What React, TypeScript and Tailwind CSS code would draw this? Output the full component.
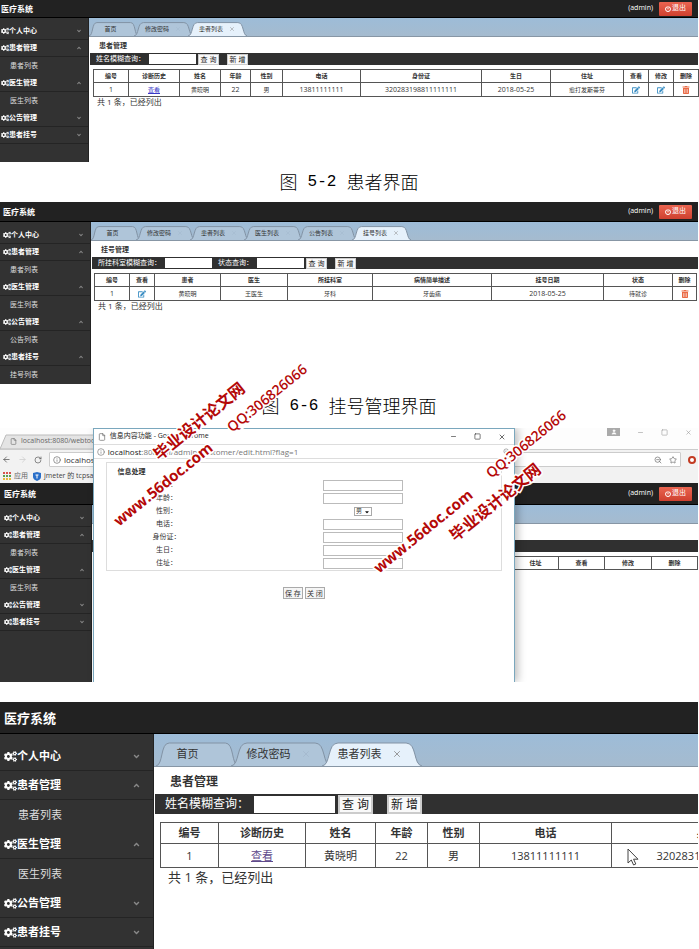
import type { ReactNode } from "react";
import { FaAngleDown, FaAngleUp, FaCaretDown, FaCogs, FaEdit, FaPowerOff, FaTrashAlt } from "react-icons/fa";
import { ArrowLeft, ArrowRight, File, Info, Minus, RotateCw, Square, Star, User, X, ZoomOut } from "lucide-react";

interface MenuGroup {
  label: string;
  items: string[];
}

interface Column {
  label: string;
  width: string;
}

const patientMenu: MenuGroup[] = [
  { label: "个人中心", items: [] },
  { label: "患者管理", items: ["患者列表"] },
  { label: "医生管理", items: ["医生列表"] },
  { label: "公告管理", items: [] },
  { label: "患者挂号", items: [] },
];

const registerMenu: MenuGroup[] = [
  { label: "个人中心", items: [] },
  { label: "患者管理", items: ["患者列表"] },
  { label: "医生管理", items: ["医生列表"] },
  { label: "公告管理", items: ["公告列表"] },
  { label: "患者挂号", items: ["挂号列表"] },
];

const patientColumns: Column[] = [
  { label: "编号", width: "w-[35px]" },
  { label: "诊断历史", width: "w-[51px]" },
  { label: "姓名", width: "w-[41px]" },
  { label: "年龄", width: "w-[30px]" },
  { label: "性别", width: "w-[32px]" },
  { label: "电话", width: "w-[78px]" },
  { label: "身份证", width: "w-[121px]" },
  { label: "生日", width: "w-[69px]" },
  { label: "住址", width: "w-[73px]" },
  { label: "查看", width: "w-[25px]" },
  { label: "修改", width: "w-[25px]" },
  { label: "删除", width: "w-[25px]" },
];

const registerColumns: Column[] = [
  { label: "编号", width: "w-[35px]" },
  { label: "查看", width: "w-[25px]" },
  { label: "患者", width: "w-[66px]" },
  { label: "医生", width: "w-[67px]" },
  { label: "所挂科室", width: "w-[85px]" },
  { label: "病情简单描述", width: "w-[119px]" },
  { label: "挂号日期", width: "w-[112px]" },
  { label: "状态", width: "w-[69px]" },
  { label: "删除", width: "w-[24px]" },
];

const editColumns: Column[] = [
  { label: "住址", width: "w-[46px]" },
  { label: "查看", width: "w-[46px]" },
  { label: "修改", width: "w-[47px]" },
  { label: "删除", width: "w-[46px]" },
];

const zoomedColumns: Column[] = [
  { label: "编号", width: "w-[58px]" },
  { label: "诊断历史", width: "w-[87px]" },
  { label: "姓名", width: "w-[70px]" },
  { label: "年龄", width: "w-[52px]" },
  { label: "性别", width: "w-[52px]" },
  { label: "电话", width: "w-[132px]" },
  { label: "身份证", width: "w-[203px]" },
];

const historyLink = (
  <a href="#history" className="text-[#3a3ac8] underline">
    查看
  </a>
);

const visitedLink = (
  <a href="#history" className="text-[#5f4a8b] underline">
    查看
  </a>
);

const editButton = (
  <button aria-label="编辑" className="mx-auto block text-[#3d8fc4]">
    <FaEdit size={8} />
  </button>
);

const deleteButton = (
  <button aria-label="删除" className="mx-auto block text-[#ea6a45]">
    <FaTrashAlt size={8} />
  </button>
);

export default function App() {
  return (
    <main className="relative min-h-screen overflow-hidden bg-white pr-px font-['Open_Sans','Noto_Sans_CJK_SC',sans-serif] text-[#333]">
      <section className="flex flex-col">
        <TopBar height="h-[18px]" pad="pl-px" />
        <div className="flex">
          <Sidebar groups={patientMenu} width="w-[89px]" pad="pl-px" bottom="pb-[18px]" />
          <div className="min-w-0 flex-1">
            <TabBar tabs={["首页", "修改密码", "患者列表"]} />
            <PageTitle text="患者管理" />
            <SearchBar fields={["姓名模糊查询："]} />
            <div className="pl-1 pr-px pt-1">
              <DataTable
                columns={patientColumns}
                row={["1", historyLink, "黄晓明", "22", "男", "13811111111", "320283198811111111", "2018-05-25", "愈打发斯蒂芬", editButton, editButton, deleteButton]}
              />
              <p className="pl-1 text-[8px] leading-[10px]">共 1 条，已经列出</p>
            </div>
          </div>
        </div>
      </section>

      <Caption number="5-2" text="患者界面" height="h-10" />

      <section className="flex flex-col">
        <TopBar height="h-5" pad="pl-[3px]" />
        <div className="flex">
          <Sidebar groups={registerMenu} width="w-[91px]" pad="pl-[3px]" bottom="pb-0" />
          <div className="min-w-0 flex-1">
            <TabBar tabs={["首页", "修改密码", "患者列表", "医生列表", "公告列表", "挂号列表"]} />
            <PageTitle text="挂号管理" />
            <SearchBar fields={["所挂科室模糊查询：", "状态查询："]} />
            <div className="pl-[3px] pr-0.5 pt-1">
              <DataTable
                columns={registerColumns}
                row={["1", editButton, "黄晓明", "王医生", "牙科", "牙齿痛", "2018-05-25", "待就诊", deleteButton]}
              />
              <p className="pl-1 text-[8px] leading-[10px]">共 1 条，已经列出</p>
            </div>
          </div>
        </div>
      </section>

      <Caption number="6-6" text="挂号管理界面" height="h-11" />

      <section className="relative mb-5 flex flex-col overflow-hidden">
        <BrowserChrome />
        <TopBar height="h-[22px]" pad="pl-1" />
        <div className="flex">
          <Sidebar groups={patientMenu} width="w-[92px]" pad="pl-1" bottom="pb-[51px]" />
          <div className="min-w-0 flex-1">
            <TabBar tabs={[]} />
            <div className="h-4" />
            <div className="h-3 bg-[#303030]" />
            <div className="flex justify-end pr-px pt-1">
              <div className="w-[185px]">
                <DataTable columns={editColumns} />
              </div>
            </div>
          </div>
        </div>
        <EditWindow />
      </section>

      <section className="flex flex-col overflow-hidden">
        <header className="flex h-8 items-center border-b border-black bg-[#222] pl-1">
          <h1 className="text-[13px] font-bold leading-4 text-white">医疗系统</h1>
        </header>
        <div className="flex">
          <Sidebar groups={patientMenu} width="w-[154px]" pad="pl-1" bottom="pb-[3px]" large />
          <div className="min-w-0 flex-1 overflow-hidden">
            <TabBar tabs={["首页", "修改密码", "患者列表"]} large />
            <PageTitle text="患者管理" large />
            <SearchBar fields={["姓名模糊查询："]} large />
            <div className="relative pl-1.5 pt-2">
              <div className="w-[655px]">
                <DataTable
                  columns={zoomedColumns}
                  row={["1", visitedLink, "黄晓明", "22", "男", "13811111111", "320283198811111111"]}
                  large
                />
              </div>
              <p className="pl-2 text-[13px] leading-[18px]">共 1 条，已经列出</p>
              <svg viewBox="0 0 12 18" className="absolute left-[473px] top-[34px] h-[18px] w-3" fill="white" stroke="#444">
                <path d="M1 1v14l3.300-3 2.300 5 2.200-1-2.200-4.800H11z" />
              </svg>
            </div>
          </div>
        </div>
      </section>

      <Watermark text="毕业设计论文网" place="left-[199px] top-[421px]" font="text-[16px] font-bold" />
      <Watermark text="QQ:306826066" place="left-[267px] top-[398px]" font="text-[14px] font-semibold" />
      <Watermark text="www.56doc.com" place="left-[163px] top-[484px]" font="text-[15px] font-bold" />
      <Watermark text="QQ:306826066" place="left-[526px] top-[444px]" font="text-[14px] font-semibold" />
      <Watermark text="毕业设计论文网" place="left-[495px] top-[502px]" font="text-[16px] font-bold" />
      <Watermark text="www.56doc.com" place="left-[423px] top-[531px]" font="text-[15px] font-bold" />
    </main>
  );
}

function TopBar({ height, pad }: { height: string; pad: string }) {
  return (
    <header className={`flex items-center justify-between border-b border-black bg-[#222] pr-1.5 ${height} ${pad}`}>
      <h1 className="text-[8px] font-bold leading-3 text-white">医疗系统</h1>
      <div className="flex items-center gap-1.5 text-[7px] text-white">
        <span>(admin)</span>
        <button className="flex h-[14px] w-[33px] items-center justify-center gap-px rounded-[1px] bg-gradient-to-b from-[#ea6450] to-[#cf402f]">
          <FaPowerOff size={6} />
          退出
        </button>
      </div>
    </header>
  );
}

interface SidebarProps {
  groups: MenuGroup[];
  width: string;
  pad: string;
  bottom: string;
  large?: boolean;
}

function Sidebar({ groups, width, pad, bottom, large }: SidebarProps) {
  return (
    <nav className={`shrink-0 border-r border-[#222] bg-[#323232] text-white ${large ? "pt-2" : "pt-[5px]"} ${width} ${bottom}`}>
      {groups.map((group) => {
        const Arrow = group.items.length ? FaAngleUp : FaAngleDown;
        return (
          <div key={group.label}>
            <button
              className={`flex w-full items-center border-b border-[#242424] font-bold ${pad} ${
                large ? "h-[29px] pr-3 text-[11px]" : "h-[17px] pr-1.5 text-[7px]"
              }`}
            >
              <FaCogs size={large ? 13 : 8} />
              {group.label}
              <Arrow size={large ? 9 : 6} className="ml-auto text-[#888]" />
            </button>
            {group.items.map((item) => (
              <a
                key={item}
                href="#list"
                className={`flex items-center text-[#ddd] ${large ? "h-[30px] pl-[18px] text-[11px]" : "h-[18px] pl-[10px] text-[7px]"}`}
              >
                {item}
              </a>
            ))}
          </div>
        );
      })}
    </nav>
  );
}

function TabBar({ tabs, large }: { tabs: string[]; large?: boolean }) {
  return (
    <div
      role="tablist"
      className={`flex items-end border-b border-[#8796a5] bg-gradient-to-b from-[#9dbcd8] to-[#a5bbcf] ${
        large ? "h-[33px] pl-1" : "h-[19px] pl-0.5"
      }`}
    >
      {tabs.map((tab, i) => {
        const active = i === tabs.length - 1;
        const size = large
          ? i === 0 ? "h-6 w-[75px] pr-4 text-[11px]" : "h-6 w-[91px] text-[11px]"
          : i === 0 ? "h-[14px] w-[45px] pr-1.5 text-[6px]" : "h-[14px] w-[54px] text-[6px]";
        return (
          <button key={tab} role="tab" aria-selected={active} className={`relative shrink-0 ${size}`}>
            <svg viewBox="0 0 100 24" preserveAspectRatio="none" className="absolute inset-y-0 -left-0.5 h-full w-[110%]">
              <path
                d="M0 24C9 23 5 1 16 1H84C95 1 91 23 100 24"
                fill={active ? "#e6f1fb" : "#afc5d9"}
                stroke="#8293a5"
                vectorEffect="non-scaling-stroke"
              />
            </svg>
            <span className="relative flex items-center justify-center text-[#333]">
              {tab}
              {i > 0 && <X className={large ? "ml-2.5 h-2.5 w-2.5" : "ml-1.5 h-1.5 w-1.5"} color={active ? "#888" : "#a3b8cc"} />}
            </span>
          </button>
        );
      })}
    </div>
  );
}

function PageTitle({ text, large }: { text: string; large?: boolean }) {
  return (
    <h2 className={`font-bold ${large ? "h-[27px] pl-4 text-[12px] leading-[30px]" : "h-4 pl-2.5 text-[7px] leading-[18px]"}`}>
      {text}
    </h2>
  );
}

function SearchBar({ fields, large }: { fields: string[]; large?: boolean }) {
  const button = large
    ? "h-[19px] w-[35px] border-2 text-[12px] leading-[15px]"
    : "h-[11px] w-[21px] border text-[7px] leading-[9px]";
  return (
    <form className={`ml-px flex items-center bg-[#303030] text-white ${large ? "h-5 pl-2.5 text-[12px]" : "h-3 pl-1.5 text-[7px]"}`}>
      {fields.map((field) => (
        <label key={field} className={`flex items-center ${large ? "mr-[3px]" : "mr-0.5 [&+label]:ml-1"}`}>
          {field}
          <input type="text" className={large ? "ml-[5px] h-[17px] w-[81px] bg-white" : "ml-1 h-2.5 w-[47px] bg-white"} />
        </label>
      ))}
      <button type="button" className={`whitespace-nowrap border-[#ccc] bg-[#f9f9f9] text-[#222] ${button}`}>
        查 询
      </button>
      <button type="button" className={`whitespace-nowrap border-[#ccc] bg-[#f9f9f9] text-[#222] ${large ? "ml-3.5" : "ml-2"} ${button}`}>
        新 增
      </button>
    </form>
  );
}

function DataTable({ columns, row, large }: { columns: Column[]; row?: ReactNode[]; large?: boolean }) {
  return (
    <table className="w-full table-fixed border-collapse text-center">
      <thead>
        <tr className={large ? "h-[21px] text-[11px] leading-4" : "h-[13px] text-[6px] leading-[8px]"}>
          {columns.map((column, i) => (
            <th key={i} className={`border border-[#555] p-0 ${column.width}`}>
              {column.label}
            </th>
          ))}
        </tr>
      </thead>
      {row && (
        <tbody>
          <tr className={large ? "h-6 text-[11px] leading-4" : "h-[14px] text-[6px] leading-[8px]"}>
            {row.map((cell, i) => {
              const numeric = typeof cell === "string" && /^\d/.test(cell);
              return (
                <td key={i} className={`border border-[#555] p-0 ${numeric && !large ? "text-[7px]" : ""}`}>
                  {cell}
                </td>
              );
            })}
          </tr>
        </tbody>
      )}
    </table>
  );
}

function Caption({ number, text, height }: { number: string; text: string; height: string }) {
  return (
    <p className={`flex items-center justify-center gap-2.5 text-[18px] font-light text-black ${height}`}>
      图
      <span className="font-['Liberation_Mono',monospace] text-[16px]">{number}</span>
      {text}
    </p>
  );
}

function BrowserChrome() {
  return (
    <div className="text-[7px] text-[#666]">
      <div className="flex h-[22px] items-end justify-between border-b border-[#ccc] bg-[#fdfdfd]">
        <div className="relative flex h-[15px] w-[110px] items-center gap-1 pl-2.5">
          <svg viewBox="0 0 110 15" className="absolute inset-0 h-full w-full">
            <path d="M0 15L6 1H110V15Z" fill="#e4e4e4" stroke="#bbb" />
          </svg>
          <File size={7} className="relative" />
          <span className="relative">localhost:8080/webtool</span>
        </div>
        <div className="flex items-center gap-[17px] self-start pr-1.5 text-[#999]">
          <span className="flex h-2 w-[13px] items-center justify-center bg-[#aaa] text-white">
            <User size={6} fill="white" />
          </span>
          <Minus size={7} />
          <Square size={7} />
          <X size={7} />
        </div>
      </div>
      <div className="flex h-[19px] items-center gap-[7px] bg-[#f2f2f2] px-0.5">
        <ArrowLeft size={9} color="#555" />
        <ArrowRight size={9} color="#ccc" />
        <RotateCw size={8} color="#555" />
        <div className="flex h-[15px] flex-1 items-center gap-[3px] rounded-[1px] border border-[#ccc] bg-white px-[3px]">
          <Info size={8} />
          <span className="text-[8px] text-[#333]">localhost:8080</span>
          <ZoomOut size={8} className="ml-auto" />
          <Star size={8} className="ml-1" />
        </div>
        <span className="h-2 w-2 rounded-full border-2 border-[#c23b22] bg-white" />
      </div>
      <div className="flex h-[14px] items-center gap-[3px] bg-[#f2f2f2] pl-[3px]">
        <svg viewBox="0 0 8 8" className="h-2 w-2">
          <path d="M0 0h2v2H0zM3 0h2v2H3zM6 0h2v2H6z" fill="#d9534f" />
          <path d="M0 3h2v2H0zM3 3h2v2H3zM6 3h2v2H6z" fill="#5a9e54" />
          <path d="M0 6h2v2H0zM3 6h2v2H3zM6 6h2v2H6z" fill="#e8b93c" />
        </svg>
        <span>应用</span>
        <svg viewBox="0 0 8 9" className="ml-0.5 h-[9px] w-2">
          <path d="M4 0L8 1V5C8 7 6 8 4 9C2 8 0 7 0 5V1Z" fill="#2a6fc9" />
          <path d="M2.500 3h3M4 3v3.500" stroke="white" />
        </svg>
        <span className="text-[#444]">jmeter 的 tcpsam</span>
      </div>
    </div>
  );
}

const formFields = ["姓名：", "年龄：", "性别：", "电话：", "身份证：", "生日：", "住址："];

function EditWindow() {
  return (
    <div className="absolute bottom-0 left-[13.300%] top-0 flex w-[60.500%] flex-col border border-b-0 border-[#7aa7bd] bg-white shadow-[3px_0_8px_rgba(0,0,0,0.25)]">
      <div className="flex h-4 items-center gap-1 border-b border-[#ddd] pl-1 pr-2 text-[7px] text-[#222]">
        <File size={8} color="#666" />
        <span>信息内容功能 - Google Chrome</span>
        <div className="ml-auto flex items-center gap-[17px]">
          <Minus size={7} />
          <Square size={7} />
          <X size={8} />
        </div>
      </div>
      <div className="flex h-[14px] items-center gap-[3px] border-b border-[#ddd] pl-[3px] pr-1 text-[8px] text-[#777]">
        <Info size={8} />
        <span>
          <span className="text-[#222]">localhost</span>:8080/yl/admin/customer/edit.html?flag=1
        </span>
        <ZoomOut size={7} className="ml-auto" />
      </div>
      <form className="flex flex-col items-center text-[7px]">
        <fieldset className="mt-[3px] w-[94%] border border-[#ddd]">
          <h2 className="h-4 pl-2.5 font-bold leading-[18px]">信息处理</h2>
          {formFields.map((field) => (
            <label key={field} className="grid h-[13px] grid-cols-[30%_70%] items-center justify-items-center">
              {field}
              {field === "性别：" ? (
                <span className="relative flex">
                  <select className="h-[9px] w-[18px] appearance-none border border-[#aaa] pl-px text-[6px] leading-[7px]">
                    <option>男</option>
                  </select>
                  <FaCaretDown size={6} color="#111" className="pointer-events-none absolute right-0.5 top-0.5" />
                </span>
              ) : (
                <input type="text" className="h-[11px] w-20 border border-[#bbb]" />
              )}
            </label>
          ))}
        </fieldset>
        <div className="mt-4 flex gap-0.5">
          <button type="button" className="h-3 w-5 whitespace-nowrap border border-[#aaa] bg-[#f5f5f5] leading-[9px]">
            保 存
          </button>
          <button type="button" className="h-3 w-5 whitespace-nowrap border border-[#aaa] bg-[#f5f5f5] leading-[9px]">
            关 闭
          </button>
        </div>
      </form>
    </div>
  );
}

function Watermark({ text, place, font }: { text: string; place: string; font: string }) {
  return (
    <span
      className={`pointer-events-none absolute -translate-x-1/2 -translate-y-1/2 -rotate-[39deg] whitespace-nowrap leading-none text-[#b40808] [-webkit-text-stroke:3px_white] [paint-order:stroke_fill] ${place} ${font}`}
    >
      {text}
    </span>
  );
}
